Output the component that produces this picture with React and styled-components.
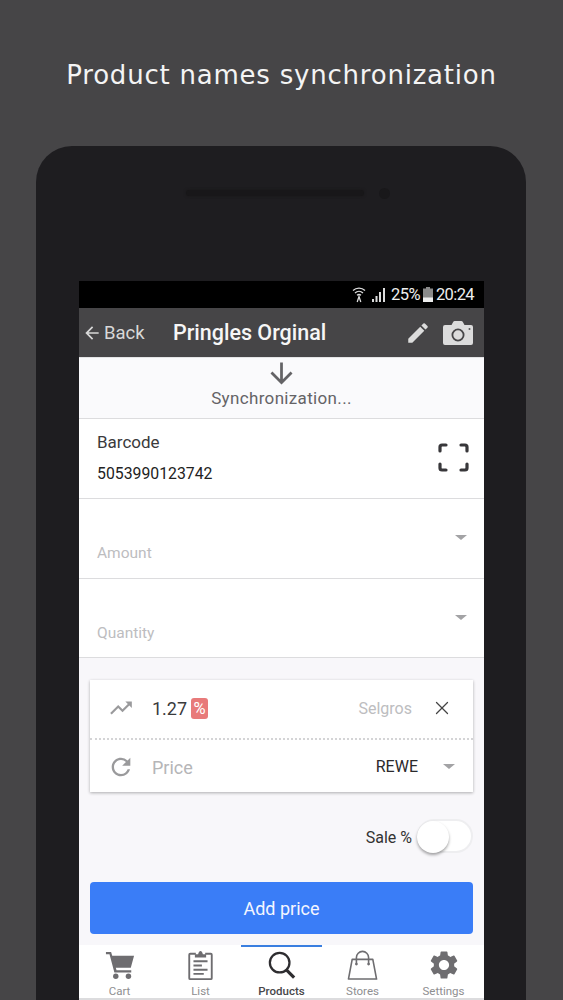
import React from "react";
import styled, { createGlobalStyle } from "styled-components";
import { MdArrowBack, MdArrowDownward, MdEdit, MdTrendingUp, MdRefresh, MdSettings } from "react-icons/md";
import { X } from "lucide-react";

const GlobalStyle = createGlobalStyle`
  html, body {
    margin: 0;
    padding: 0;
    height: 1000px;
    overflow: hidden;
    background: #464547;
    font-family: Roboto, "Liberation Sans", sans-serif;
  }
`;

const CameraIcon = () => (
  <svg width="30" height="24" viewBox="0 0 30 24">
    <path
      fill="#dcdcdc"
      fillRule="evenodd"
      d="M2 4h6.500l1.800-3.200Q10.800 0 11.700 0h6.600q.9 0 1.400.8L21.500 4H28a2 2 0 0 1 2 2v16a2 2 0 0 1-2 2H2a2 2 0 0 1-2-2V6a2 2 0 0 1 2-2zM15 7.500a6.500 6.500 0 1 0 0 13 6.500 6.500 0 0 0 0-13zm0 1.800a4.700 4.700 0 1 1 0 9.400 4.700 4.700 0 0 1 0-9.400z"
    />
    <circle cx="26.500" cy="8" r="1" fill="#555" />
  </svg>
);

const WifiIcon = () => (
  <svg width="14" height="17" viewBox="0 0 14 17" fill="none" stroke="#ddd" strokeWidth="1.300">
    <path d="M1 4.500c3.400-3.200 8.600-3.200 12 0" />
    <path d="M3 7c2.300-2.100 5.700-2.100 8 0" />
    <path d="M5 9.300c1.200-1 2.800-1 4 0" />
    <path d="M5.200 16l1.800-5.500L8.800 16" />
  </svg>
);

const SignalIcon = () => (
  <svg width="14" height="14" viewBox="0 0 14 14" fill="#ddd">
    <rect x="0" y="11" width="2" height="3" />
    <rect x="3.500" y="8" width="2" height="6" />
    <rect x="7" y="4" width="2" height="10" />
    <rect x="11" y="0" width="2" height="14" />
  </svg>
);

const BatteryIcon = () => (
  <svg width="10" height="15" viewBox="0 0 10 15">
    <path d="M3 0h4v1.500h3V15H0V1.500h3z" fill="#8a8a8a" />
    <rect y="10.500" width="10" height="4.500" fill="#eee" />
  </svg>
);

const ScanIcon = () => (
  <svg width="31" height="29" viewBox="0 0 31 29" fill="none" stroke="#38373a" strokeWidth="3.200" strokeLinecap="round" strokeLinejoin="round">
    <path d="M2 8V4a2 2 0 0 1 2-2h4" />
    <path d="M23 2h4a2 2 0 0 1 2 2v4" />
    <path d="M29 21v4a2 2 0 0 1-2 2h-4" />
    <path d="M8 27H4a2 2 0 0 1-2-2v-4" />
  </svg>
);

const CartIcon = () => (
  <svg width="30" height="30" viewBox="0 0 32 32" fill="#6e6d70">
    <path d="M1 2h5.500l1.200 4H31l-3.500 13H11.500l.8 2.500H28v2.500H10L4.800 4.500H1z" />
    <circle cx="11.500" cy="28" r="2.900" />
    <circle cx="25" cy="28" r="2.900" />
  </svg>
);

const ClipboardIcon = () => (
  <svg width="25" height="30" viewBox="0 0 26 32" fill="none" stroke="#6e6d70" strokeWidth="2">
    <path d="M8 4H2a1 1 0 0 0-1 1v25a1 1 0 0 0 1 1h22a1 1 0 0 0 1-1V5a1 1 0 0 0-1-1h-6" />
    <path fill="#6e6d70" stroke="none" d="M7 8V4.500h3.500C10.800 2.500 11.800 1 13 1s2.200 1.500 2.500 3.500H19V8z" />
    <path d="M5.500 12h15M5.500 16.500h9M5.500 21h15M5.500 25.500h11" />
  </svg>
);

const SearchIcon = () => (
  <svg width="28" height="28" viewBox="0 0 30 30" fill="none" stroke="#2e2d30" strokeWidth="2.400">
    <circle cx="12.500" cy="12.500" r="10.500" />
    <path d="M20 20.500l8 8" strokeWidth="3.400" />
  </svg>
);

const BagIcon = () => (
  <svg width="31" height="30" viewBox="0 0 32 32" fill="none" stroke="#6e6d70" strokeWidth="1.700">
    <path d="M5 10h22l4 21H1z" strokeLinejoin="round" />
    <path d="M9.500 14V8a6.500 6.500 0 0 1 13 0v6" />
    <circle cx="9.500" cy="15" r="1.500" fill="#6e6d70" stroke="none" />
    <circle cx="22.500" cy="15" r="1.500" fill="#6e6d70" stroke="none" />
  </svg>
);

const Page = styled.div`
  height: 1000px;
  overflow: hidden;
  display: flex;
  flex-direction: column;
`;

const Headline = styled.h1`
  margin: 0;
  height: 146px;
  padding-top: 58px;
  box-sizing: border-box;
  text-align: center;
  font-family: "DejaVu Sans", sans-serif;
  font-size: 26px;
  line-height: 34px;
  font-weight: 400;
  letter-spacing: 0.78px;
  color: #f4f4f4;
`;

const Phone = styled.div`
  width: 490px;
  height: 854px;
  margin-left: 36px;
  flex-shrink: 0;
  box-sizing: border-box;
  background: #1e1d20;
  border-radius: 36px 36px 0 0;
  padding: 0 42px 0 43px;
  display: flex;
  flex-direction: column;
`;

const Earpiece = styled.div`
  height: 135px;
  flex-shrink: 0;
  padding-top: 44px;
  box-sizing: border-box;
  display: flex;
  justify-content: center;
  align-items: flex-start;
  gap: 15px;
`;

const Speaker = styled.div`
  width: 178px;
  height: 6px;
  margin-left: 13px;
  background: #181719;
  border-radius: 3px;
  box-shadow: 0 0 3px #181719;
`;

const Lens = styled.div`
  width: 11px;
  height: 11px;
  margin-top: -2px;
  background: #19181a;
  border-radius: 50%;
`;

const Screen = styled.div`
  flex: 1;
  background: #f8f7fa;
  display: flex;
  flex-direction: column;
`;

const StatusBar = styled.div`
  height: 27px;
  flex-shrink: 0;
  background: #000;
  color: #eee;
  display: flex;
  align-items: center;
  justify-content: flex-end;
  padding-right: 10px;
  font-size: 16.500px;
  letter-spacing: -0.6px;
`;

const StatusGap = styled.span`
  display: inline-flex;
  align-items: center;
  margin-left: ${(p) => p.$gap}px;
`;

const Toolbar = styled.div`
  height: 50px;
  flex-shrink: 0;
  background: #464547;
  display: flex;
  align-items: center;
  padding: 0 11px 0 3px;
  border-bottom: 1px solid #e4e4e6;
  box-sizing: border-box;
`;

const BackLink = styled.div`
  width: 91px;
  display: flex;
  align-items: center;
  gap: 2px;
  color: #d8d8d8;
  font-size: 18.500px;
`;

const ToolbarTitle = styled.div`
  flex: 1;
  color: #f6f6f6;
  font-size: 21.500px;
  font-weight: 500;
`;

const ToolbarActions = styled.div`
  display: flex;
  align-items: center;
  gap: 12px;
`;

const SyncBlock = styled.div`
  height: 61px;
  flex-shrink: 0;
  box-sizing: border-box;
  background: #fafafc;
  border-bottom: 1px solid #dcdcde;
  display: flex;
  flex-direction: column;
  align-items: center;
  color: #646366;
  font-size: 17px;
  letter-spacing: 0.34px;
  line-height: 20px;
`;

const SyncArrow = styled.div`
  height: 30px;
  display: flex;
  align-items: center;
  justify-content: center;
`;

const BarcodeRow = styled.div`
  height: 80px;
  flex-shrink: 0;
  box-sizing: border-box;
  background: #fff;
  border-bottom: 1px solid #dcdcde;
  padding: 12px 15px 0 18px;
  display: flex;
  justify-content: space-between;
`;

const BarcodeLabel = styled.div`
  font-size: 17px;
  line-height: 22px;
  color: #3a3a3c;
`;

const BarcodeValue = styled.div`
  margin-top: 10px;
  font-size: 15.800px;
  line-height: 22px;
  color: #222;
`;

const ScanWrap = styled.div`
  margin-top: 12px;
`;

const SelectRow = styled.div`
  height: ${(p) => p.$height}px;
  flex-shrink: 0;
  box-sizing: border-box;
  background: #fff;
  border-bottom: 1px solid #dcdcde;
  padding: 0 17px 0 18px;
  display: flex;
  align-items: flex-start;
  justify-content: space-between;
`;

const Placeholder = styled.div`
  margin-top: 44px;
  font-size: 15.500px;
  line-height: 20px;
  color: #bdbdbf;
`;

const Caret = styled.div`
  width: 0;
  height: 0;
  flex-shrink: 0;
  border-left: 6px solid transparent;
  border-right: 6px solid transparent;
  border-top: 5.500px solid #a3a3a5;
  margin-top: ${(p) => p.$top || 0}px;
  margin-left: ${(p) => p.$left || 0}px;
  margin-right: ${(p) => p.$right || 0}px;
`;

const PriceCard = styled.div`
  margin: 22px 11px 0;
  background: #fff;
  box-shadow: 0 1px 3px rgba(0, 0, 0, 0.3);
`;

const PriceRow = styled.div`
  height: ${(p) => p.$height}px;
  display: flex;
  align-items: center;
  box-sizing: border-box;
  padding: 0 20px 0 ${(p) => p.$inset}px;
  padding-bottom: ${(p) => p.$lift || 0}px;
`;

const Divider = styled.div`
  border-top: 2px dotted #d4d4d6;
  height: 1px;
`;

const RowIcon = styled.div`
  width: ${(p) => p.$width}px;
  display: flex;
  color: #9a9a9c;
`;

const PriceValue = styled.div`
  font-size: 18px;
  color: #3a3a3c;
`;

const PercentBadge = styled.div`
  width: 17px;
  height: 21px;
  margin-left: 4px;
  border-radius: 3px;
  background: #e87a7a;
  color: #fff;
  font-size: 16.500px;
  display: flex;
  align-items: center;
  justify-content: center;
`;

const StoreName = styled.div`
  margin-left: auto;
  font-size: 16px;
  color: ${(p) => (p.$muted ? "#bdbdbf" : "#2a2a2c")};
`;

const RemoveButton = styled.div`
  width: 24px;
  margin: 0 -1px 0 18px;
  display: flex;
  justify-content: center;
  color: #444;
`;

const PricePlaceholder = styled.div`
  margin-top: 1px;
  font-size: 18px;
  color: #b5b5b7;
`;

const SaleRow = styled.div`
  height: 41px;
  margin: 25px 11px 0 0;
  display: flex;
  align-items: center;
  justify-content: flex-end;
  gap: 5px;
  font-size: 16px;
  color: #333;
`;

const SwitchTrack = styled.div`
  width: 56px;
  height: 34px;
  margin-top: -3px;
  box-sizing: border-box;
  position: relative;
  background: #fff;
  border: 2px solid #eeeef0;
  border-radius: 17px;
`;

const SwitchThumb = styled.div`
  position: absolute;
  left: -2px;
  top: 0;
  width: 32px;
  height: 32px;
  border-radius: 50%;
  background: #fff;
  box-shadow: 0 2px 3px rgba(0, 0, 0, 0.35);
`;

const AddButton = styled.div`
  height: 52px;
  flex-shrink: 0;
  margin: 24px 11px 0;
  background: #3a7df7;
  border-radius: 4px;
  color: #f4f6ff;
  font-size: 18px;
  display: flex;
  align-items: center;
  justify-content: center;
`;

const TabBar = styled.div`
  height: 53px;
  margin-top: 11px;
  flex-shrink: 0;
  background: #fff;
  display: grid;
  grid-template-columns: repeat(5, 81px);
  border-bottom: 2px solid #dcdcde;
`;

const Tab = styled.div`
  display: flex;
  flex-direction: column;
  align-items: center;
  height: 53px;
  box-sizing: border-box;
  padding-top: 3px;
  border-top: 2px solid ${(p) => (p.$active ? "#3a7fe0" : "transparent")};
  color: ${(p) => (p.$active ? "#48474a" : "#8e8e90")};
  font-size: 11.500px;
  font-weight: ${(p) => (p.$active ? 500 : 400)};
  line-height: 14px;
`;

const TabIcon = styled.div`
  height: 30px;
  margin-bottom: 4px;
  display: flex;
  align-items: center;
  justify-content: center;
`;

const tabs = [
  { label: "Cart", icon: <CartIcon /> },
  { label: "List", icon: <ClipboardIcon /> },
  { label: "Products", icon: <SearchIcon />, active: true },
  { label: "Stores", icon: <BagIcon /> },
  { label: "Settings", icon: <MdSettings size={34} color="#6e6d70" /> },
];

const App = () => {
  return (
    <Page>
      <GlobalStyle />
      <Headline>Product names synchronization</Headline>
      <Phone>
        <Earpiece>
          <Speaker />
          <Lens />
        </Earpiece>
        <Screen>
          <StatusBar>
            <WifiIcon />
            <StatusGap $gap={6}>
              <SignalIcon />
            </StatusGap>
            <StatusGap $gap={5}>25%</StatusGap>
            <StatusGap $gap={3}>
              <BatteryIcon />
            </StatusGap>
            <StatusGap $gap={3}>20:24</StatusGap>
          </StatusBar>
          <Toolbar>
            <BackLink>
              <MdArrowBack size={20} />
              Back
            </BackLink>
            <ToolbarTitle>Pringles Orginal</ToolbarTitle>
            <ToolbarActions>
              <MdEdit size={26} color="#dcdcdc" />
              <CameraIcon />
            </ToolbarActions>
          </Toolbar>
          <SyncBlock>
            <SyncArrow>
              <MdArrowDownward size={33} />
            </SyncArrow>
            Synchronization...
          </SyncBlock>
          <BarcodeRow>
            <div>
              <BarcodeLabel>Barcode</BarcodeLabel>
              <BarcodeValue>5053990123742</BarcodeValue>
            </div>
            <ScanWrap>
              <ScanIcon />
            </ScanWrap>
          </BarcodeRow>
          <SelectRow $height={80}>
            <Placeholder>Amount</Placeholder>
            <Caret $top={36} />
          </SelectRow>
          <SelectRow $height={79}>
            <Placeholder>Quantity</Placeholder>
            <Caret $top={36} />
          </SelectRow>
          <PriceCard>
            <PriceRow $height={58} $lift={2} $inset={18}>
              <RowIcon $width={44}>
                <MdTrendingUp size={26} />
              </RowIcon>
              <PriceValue>1.27</PriceValue>
              <PercentBadge>%</PercentBadge>
              <StoreName $muted>Selgros</StoreName>
              <RemoveButton>
                <X size={22} strokeWidth={1.4} />
              </RemoveButton>
            </PriceRow>
            <Divider />
            <PriceRow $height={51} $inset={17}>
              <RowIcon $width={45}>
                <MdRefresh size={28} />
              </RowIcon>
              <PricePlaceholder>Price</PricePlaceholder>
              <StoreName>REWE</StoreName>
              <Caret $left={25} $right={-2} />
            </PriceRow>
          </PriceCard>
          <SaleRow>
            Sale %
            <SwitchTrack>
              <SwitchThumb />
            </SwitchTrack>
          </SaleRow>
          <AddButton>Add price</AddButton>
          <TabBar>
            {tabs.map((tab) => (
              <Tab key={tab.label} $active={tab.active}>
                <TabIcon>{tab.icon}</TabIcon>
                {tab.label}
              </Tab>
            ))}
          </TabBar>
        </Screen>
      </Phone>
    </Page>
  );
};

export default App;
